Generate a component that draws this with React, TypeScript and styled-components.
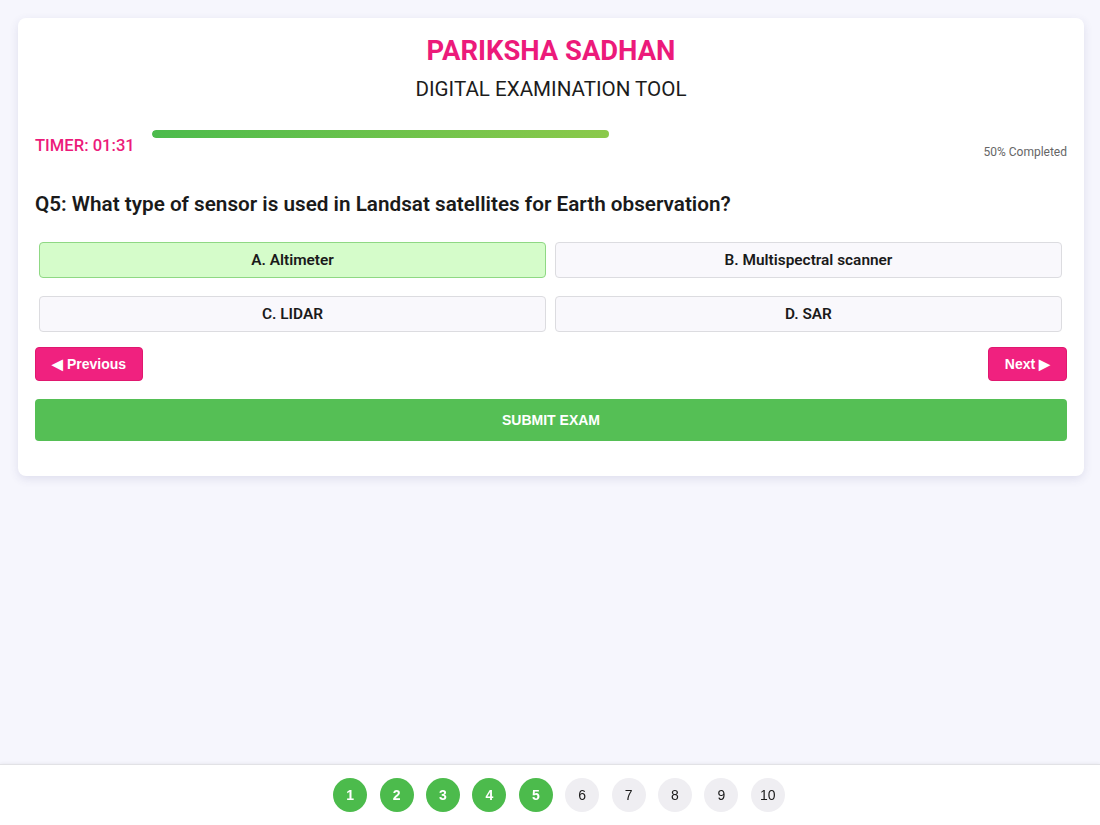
import styled, { createGlobalStyle } from "styled-components";

const GlobalStyle = createGlobalStyle`
  html, body {
    margin: 0;
    padding: 0;
    background: #f6f6fd;
    font-family: Roboto, "Liberation Sans", sans-serif;
  }
  * {
    box-sizing: border-box;
  }
`;

const Page = styled.div`
  min-height: 825px;
  padding: 18px 16px 0 18px;
`;

const Card = styled.div`
  background: #ffffff;
  border-radius: 8px;
  box-shadow: 0 3px 10px rgba(60, 60, 120, 0.12);
  padding: 17px 17px 35px;
`;

const Header = styled.header`
  display: flex;
  flex-direction: column;
  align-items: center;
  .title {
    margin: 0;
    color: #ec1a7a;
    font-size: 27.4px;
    font-weight: 700;
    line-height: 32px;
  }
  .subtitle {
    margin: 9px 0 0;
    color: #1c1c1c;
    font-size: 20.6px;
    font-weight: 400;
    line-height: 26px;
  }
`;

const StatusRow = styled.div`
  display: flex;
  align-items: center;
  margin-top: 28px;
  .timer {
    color: #ec1a7a;
    font-size: 16.6px;
    font-weight: 500;
    margin-right: 17px;
    margin-top: 1px;
  }
`;

const ProgressBox = styled.div`
  flex: 1;
  display: flex;
  flex-direction: column;
  .completed {
    align-self: flex-end;
    margin-top: 7px;
    color: #666;
    font-size: 12px;
    line-height: 14px;
  }
`;

const Track = styled.div`
  height: 8px;
  border-radius: 4px;
  overflow: hidden;
`;

const Fill = styled.div`
  height: 100%;
  border-radius: 4px;
  background: linear-gradient(90deg, #4cbb4c, #8bc94b);
`;

const Question = styled.h2`
  margin: 32px 0 0;
  color: #1a1a1a;
  font-size: 20.7px;
  font-weight: 600;
  line-height: 26px;
`;

const Options = styled.div`
  display: grid;
  grid-template-columns: 1fr 1fr;
  column-gap: 9px;
  row-gap: 18px;
  padding: 0 5px 0 4px;
  margin-top: 25px;
`;

const Option = styled.button<{ $selected?: boolean }>`
  height: 36px;
  border-radius: 4px;
  border: 1px solid ${(p) => (p.$selected ? "#8fd884" : "#dcdce0")};
  background: ${(p) => (p.$selected ? "#d5fcca" : "#f9f8fc")};
  color: #1a1a1a;
  font-family: Roboto, "Liberation Sans", sans-serif;
  font-size: 15.4px;
  font-weight: 600;
  cursor: pointer;
`;

const NavRow = styled.div`
  display: flex;
  justify-content: space-between;
  margin-top: 15px;
`;

const NavButton = styled.button`
  height: 34px;
  padding: 0 16px;
  border: 1px solid #e0186f;
  border-radius: 4px;
  background: #f0217f;
  color: #ffffff;
  font-family: "Liberation Sans", Arial, sans-serif;
  font-size: 14px;
  font-weight: 700;
  cursor: pointer;
`;

const SubmitButton = styled.button`
  width: 100%;
  height: 42px;
  margin-top: 18px;
  border: none;
  border-radius: 4px;
  background: #55bf55;
  color: #ffffff;
  font-family: "Liberation Sans", Arial, sans-serif;
  font-size: 14px;
  font-weight: 700;
  cursor: pointer;
`;

const Footer = styled.footer`
  position: fixed;
  left: 0;
  right: 0;
  bottom: 0;
  height: 61px;
  background: #ffffff;
  border-top: 1px solid #e2e2e6;
  box-shadow: 0 -1px 3px rgba(0, 0, 0, 0.05);
  display: flex;
  justify-content: center;
  align-items: center;
  gap: 12.4px;
  padding: 0 0 1px 18px;
`;

const Dot = styled.div<{ $done?: boolean }>`
  width: 34px;
  height: 34px;
  border-radius: 50%;
  display: flex;
  align-items: center;
  justify-content: center;
  background: ${(p) => (p.$done ? "#4cbb4c" : "#efeef2")};
  color: ${(p) => (p.$done ? "#ffffff" : "#1a1a1a")};
  font-family: "Liberation Sans", Arial, sans-serif;
  font-size: 14px;
  font-weight: ${(p) => (p.$done ? 700 : 400)};
`;

const options = [
  { label: "A. Altimeter", selected: true },
  { label: "B. Multispectral scanner" },
  { label: "C. LIDAR" },
  { label: "D. SAR" },
];

const progress = 50;

const App = () => {
  return (
    <>
      <GlobalStyle />
      <Page>
        <Card>
          <Header>
            <h1 className="title">PARIKSHA SADHAN</h1>
            <p className="subtitle">DIGITAL EXAMINATION TOOL</p>
          </Header>
          <StatusRow>
            <span className="timer">TIMER: 01:31</span>
            <ProgressBox>
              <Track>
                <Fill style={{ width: `${progress}%` }} />
              </Track>
              <span className="completed">{progress}% Completed</span>
            </ProgressBox>
          </StatusRow>
          <Question>
            Q5: What type of sensor is used in Landsat satellites for Earth
            observation?
          </Question>
          <Options>
            {options.map((o) => (
              <Option key={o.label} $selected={o.selected}>
                {o.label}
              </Option>
            ))}
          </Options>
          <NavRow>
            <NavButton>◀ Previous</NavButton>
            <NavButton>Next ▶</NavButton>
          </NavRow>
          <SubmitButton>SUBMIT EXAM</SubmitButton>
        </Card>
      </Page>
      <Footer>
        {Array.from({ length: 10 }, (_, i) => (
          <Dot key={i} $done={i < 5}>
            {i + 1}
          </Dot>
        ))}
      </Footer>
    </>
  );
};

export default App;
